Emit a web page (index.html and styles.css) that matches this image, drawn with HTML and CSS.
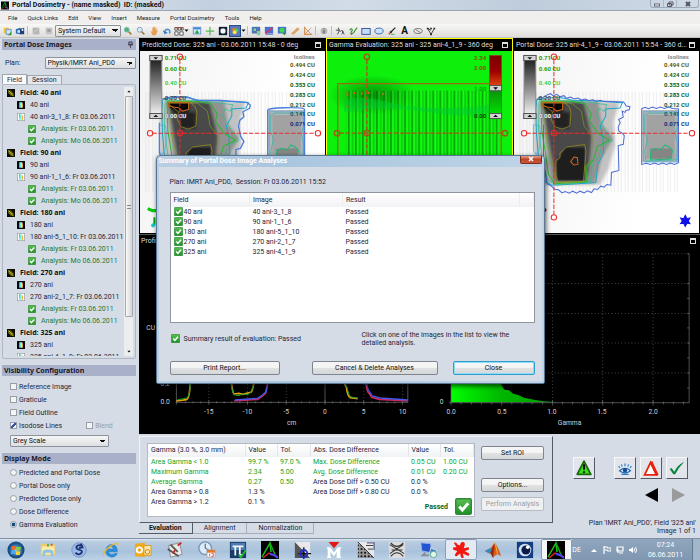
FILE: index.html
```html
<!DOCTYPE html>
<html lang="en">
<head>
<meta charset="utf-8">
<title>Portal Dosimetry</title>
<link rel="stylesheet" href="styles.css">
</head>
<body>
<svg class="defs" aria-hidden="true">
  <defs>
    <linearGradient id="greenFill" x1="0" y1="0" x2="0" y2="1"><stop offset="0" stop-color="#5cc052"/><stop offset="1" stop-color="#1f8f28"/></linearGradient>
    <linearGradient id="greyBar" x1="0" y1="0" x2="0" y2="1"><stop offset="0" stop-color="#111"/><stop offset="1" stop-color="#fff"/></linearGradient>
    <linearGradient id="gammaBar" x1="0" y1="0" x2="0" y2="1"><stop offset="0" stop-color="#7a0000"/><stop offset=".25" stop-color="#900"/><stop offset=".5" stop-color="#e84a10"/><stop offset=".51" stop-color="#0a8a0a"/><stop offset="1" stop-color="#0e0"/></linearGradient>
    <linearGradient id="histFill" x1="0" x2="1"><stop offset="0" stop-color="#0f0"/><stop offset=".5" stop-color="#00b400"/><stop offset="1" stop-color="#00a000"/></linearGradient>
    <linearGradient id="rainbow" x1="0" x2="1"><stop offset="0" stop-color="#38d"/><stop offset=".35" stop-color="#5ee"/><stop offset=".6" stop-color="#fe5"/><stop offset="1" stop-color="#e83"/></linearGradient>
    <radialGradient id="orb"><stop offset="0" stop-color="#8fd0f0"/><stop offset=".6" stop-color="#2a6ca8"/><stop offset="1" stop-color="#123c6c"/></radialGradient>
    <radialGradient id="glow"><stop offset="0" stop-color="#003000" stop-opacity=".5"/><stop offset="1" stop-color="#003000" stop-opacity="0"/></radialGradient>
    <filter id="soft" x="-20%" y="-20%" width="140%" height="140%"><feGaussianBlur stdDeviation="5"/></filter>
    <pattern id="stripes" width="21" height="30" patternUnits="userSpaceOnUse">
      <path d="M5 0v30" stroke="#005400" stroke-width="4" opacity=".6"/>
      <path d="M16 0v30" stroke="#007a00" stroke-width="3" opacity=".45"/>
      <path d="M11 0v30" stroke="#3f3" stroke-width="3" opacity=".5"/>
    </pattern>
    <pattern id="faint" width="21" height="30" patternUnits="userSpaceOnUse"><path d="M5 0v30M14 0v30" stroke="#ccc" stroke-width="3" opacity=".35"/></pattern>
    <pattern id="dots" width="4" height="4" patternUnits="userSpaceOnUse"><path d="M0 0h2v2H0z" fill="#111"/></pattern>

    <symbol id="check" viewBox="0 0 12 12"><rect x=".5" y=".5" width="11" height="11" rx="1" fill="url(#greenFill)" stroke="#2c8a34"/><path d="M3 6l2.200 2.500L9.300 3.700" fill="none" stroke="#fff" stroke-width="2"/></symbol>
    <symbol id="beam" viewBox="0 0 12 12"><path d="M0 0h12v12H0z" fill="#0c0c00"/><path d="M2 3l3-1 5 5-1 3-3 0-4-4z" fill="#8c8410"/><path d="M2.500 6l4-3M4.500 8l4-3M6.500 10l3-3" stroke="#2a2800"/><path d="M2 2l8 9" stroke="#e4d83c"/></symbol>
    <symbol id="predicted" viewBox="0 0 12 12"><path d="M0 0h12v12H0z" fill="#0a0a14"/><path d="M3 2h5l1 3v5H3z" fill="url(#rainbow)"/></symbol>
    <symbol id="portal" viewBox="0 0 12 12"><rect x=".5" y=".5" width="11" height="11" fill="#fff" stroke="#999"/><path d="M3 2h4l2 3v5H4z" fill="url(#rainbow)"/></symbol>
    <symbol id="tri" viewBox="0 0 10 6"><path d="M1 1h8L5 5.500z"/></symbol>
    <symbol id="varian" viewBox="0 0 18 18"><path d="M0 0h18v18H0z" fill="#020202"/><path d="M1 16L9 2l1 9" fill="none" stroke="#20c020" stroke-width="1.500"/><path d="M9 2l6 14" fill="none" stroke="#1a1" stroke-width="1.500"/><path d="M2 17l6-5 9 4" fill="none" stroke="#e02020" stroke-width="1.500"/><path d="M9 13l4 1 4 3" fill="none" stroke="#44f" stroke-width="2"/></symbol>

    <symbol id="scale" viewBox="135 150 552 549">
      <rect x="165" y="167" width="35" height="188" fill="url(#greyBar)" stroke="#888" stroke-width="3"/>
      <path d="M164 167h37v15h-37zM164 340h37v15h-37z" fill="#d4d4d4" stroke="#555" stroke-width="3"/>
      <path d="M175 172h14l-7 7zM175 351h14l-7-7z" fill="#111"/>
    </symbol>
    <symbol id="crosshair" viewBox="135 150 552 549">
      <g fill="none" stroke="#ee2a2a" stroke-width="3">
        <path d="M254 180v462M172 399h488" stroke-dasharray="13 5"/>
        <circle cx="254" cy="171" r="8"/><circle cx="254" cy="399" r="8"/><circle cx="254" cy="650" r="8"/><circle cx="165" cy="399" r="8"/><circle cx="666" cy="399" r="8"/>
      </g>
    </symbol>
    <symbol id="dose" viewBox="135 150 552 549">
      <path d="M150 275h481v300H150z" fill="url(#faint)"/>
      <g filter="url(#soft)">
        <path d="M195 305h255l-18 60 5 70-20 70-25 48H225l-30-70z" fill="#c2c2c2"/>
        <path d="M212 303h175l10 70 35 40-35 60-20 75H245z" fill="#929292"/>
        <path d="M218 305h125l25 105-10 100-10 35h-88l-16-90z" fill="#484848"/>
        <path d="M222 306h60v30h20v50h-48v-30l-30-30zM262 480l30-40h54v100h-80z" fill="#222"/>
      </g>
      <path d="M218 308h62v20l-20 4-38-8z" fill="#060606"/>
      <path d="M262 490l26-46h56v94h-78z" fill="#1c1c1c" opacity=".7"/>
      <path d="M518 330h108v155H518z" fill="#b5b5b5"/>
      <path d="M530 345h85v130h-85z" fill="#a2a2a2"/>
      <path d="M542 445h64v30h-64z" fill="#858585"/>
      <g fill="none" stroke-width="2">
        <path d="M203 300l30-7h46l30 8 60 1 90 6-8 16-42 3v20l-16 30 8 40 2 40-18 35-6 54-52 4-80 4-22-14-15-50-8-90-2-70z" stroke="#1aa6c8" stroke-width="3"/>
        <path d="M210 302h80l60 4 62 8-8 20-15-10-8 22 22 36 26 40-30 12-10 34-20 24-6 52-100 10-28-16-15-60-12-90z" stroke="#1fc08c"/>
        <path d="M216 304h90l40 8 20 30-6 20 24 36 36 22-36 18-12 40-20 22v44l-96 6-18-28-10-70-10-60z" stroke="#28b830" stroke-width="3"/>
        <path d="M222 309h84l30 24 8 44 24 30-2 70-18 20v46l-88 2-12-66-14-50z" stroke="#7aa41c"/>
        <path d="M300 320l5 16-3 42-24 9-22-8-10-22 4-22-28-22v-8h60zM260 480l12-7v-15l20-18 54-7 4 20-8 90-76 3-6-20z" stroke="#a89a18"/>
        <path d="M218 308h62v20l-18 5-12-10-30-4zM314 470l10 2 2 20-12 2-10-10z" stroke="#d2681c" stroke-width="3"/>
        <path d="M525 345l14-6h80l6 5v34l-10 20 8 30-2 50-92 5-4-28 8-40-8-20z" stroke="#1bb7a4"/>
        <path d="M543 452l14-8 16 5 12-15 14 7 9 10-6 25-60 3z" stroke="#20b878" stroke-width="3"/>
        <path d="M521 335h101v150H521z" stroke="#46a6dc"/>
        <path d="M193 374l18 3 4 30-5 40-8 15-9-10z" stroke="#35b4e0"/>
      </g>
    </symbol>
  </defs>
</svg>

<div class="desktop">
<div class="window">
  <header class="titlebar">
    <svg class="app-icon"><use href="#varian"/></svg>
    <h1>Portal Dosimetry - (name masked)&nbsp; ID: (masked)</h1>
    <div class="window-controls">
      <button aria-label="Minimize"><svg viewBox="0 0 8 6"><rect x="1.500" y="3" width="5" height="2" fill="#fff" stroke="#667"/></svg></button>
      <button aria-label="Restore"><svg viewBox="0 0 8 6"><path d="M3 1h4v3H3zM1.500 2.500h4v3h-4z" fill="#eee" stroke="#556"/></svg></button>
      <button class="wide" aria-label="Close window"><svg viewBox="0 0 8 6"><path d="M2 1l4 4M6 1L2 5" stroke="#556" stroke-width="2"/></svg></button>
    </div>
  </header>

  <nav class="menubar">
    <button>File</button><button>Quick Links</button><button>Edit</button><button>View</button><button>Insert</button><button>Measure</button><button>Portal Dosimetry</button><button>Tools</button><button>Help</button>
  </nav>

  <div class="toolbar">
    <button aria-label="Open"><svg viewBox="0 0 12 12"><path d="M2 2h6v7H2z" fill="#f5c63c"/><path d="M5 4h6v6H5z" fill="#cfe4f8" stroke="#5a8ac0"/><path d="M7 11l4-4v4z" fill="#2a9c3c"/></svg></button>
    <button aria-label="Save"><svg viewBox="0 0 12 12"><path d="M1 4l5-2v8l-5-1z" fill="#2f6fb8"/><path d="M6 3l5-1v8H6z" fill="#17407c"/><path d="M3 5h3v3H3zM8 3h2v3H8z" fill="#dbe9f8"/></svg></button>
    <span class="sep"></span>
    <button aria-label="Print"><svg viewBox="0 0 12 12"><path d="M2 2h8v8H2z" fill="#b4b4b4"/><path d="M3 8l6-5" stroke="#ddd"/></svg></button>
    <button aria-label="Preview"><svg viewBox="0 0 12 12"><path d="M2 2h8v8H2z" fill="#c4c4c4"/><path d="M4 4h4v3H4z" fill="#9a9a9a"/></svg></button>
    <select class="layout-select" aria-label="Layout"><option>System Default</option></select>
    <button aria-label="Zoom in"><svg viewBox="0 0 12 12"><path d="M6 6l4 4" stroke="#a87838" stroke-width="2"/><circle cx="4.500" cy="4.500" r="3" fill="#48b868" stroke="#8ab8d8"/></svg></button>
    <button aria-label="Zoom out"><svg viewBox="0 0 12 12"><path d="M6 6l4 4" stroke="#a87838" stroke-width="2"/><circle cx="4.500" cy="4.500" r="3" fill="#d8e8f8" stroke="#7a9ab8"/></svg></button>
    <button aria-label="Pan"><svg viewBox="0 0 12 12"><path d="M2 6l2 1V2h1.500v3V1H7v4l1-3.500 1 .5v4l2-1-2 4-1 2H4z" fill="#eb9c4c"/></svg></button>
    <button aria-label="Undo"><svg viewBox="0 0 12 12"><path d="M3 7c2-5 8-3 6 2" fill="none" stroke="#4f94d8" stroke-width="2"/><path d="M1 5l2 5 4-2z" fill="#3478c0"/></svg></button>
    <button class="split" aria-label="Arrange"><svg viewBox="0 0 12 12"><path d="M1 2h3v3H1zM5 2h3v3H5zM9 2h2v3H9zM1 7h4v4H1zM7 7h4v4H7z" fill="#fff" stroke="#444"/><path d="M1 2h10" stroke="#a33"/></svg><svg class="drop"><use href="#tri"/></svg></button>
    <button aria-label="Export"><svg viewBox="0 0 12 12"><rect x="1.500" y="1.500" width="9" height="8" fill="#dcefff" stroke="#4a8ad0"/><path d="M2 2h8v2H2z" fill="#3f84d4"/><path d="M6 10L3 7h2V5h2v2h2z" fill="#28a438"/></svg></button>
    <button aria-label="Crosshair"><svg viewBox="0 0 12 12"><path d="M6 1v10M1 6h10" stroke="#58b858" stroke-width="1.500"/></svg></button>
    <button aria-label="Invert"><svg viewBox="0 0 12 12"><path d="M1 1h10v10H1z" fill="#123"/><rect x="3" y="3" width="6" height="6" rx="2" fill="#f4f8fc"/></svg></button>
    <button class="split" aria-label="Colours"><span class="pressed"><svg viewBox="0 0 12 12"><circle cx="4.500" cy="4" r="3" fill="#e8722c"/><circle cx="8" cy="5" r="3" fill="#50c850"/><circle cx="5.500" cy="8" r="3" fill="#fbe24c"/></svg></span><svg class="drop"><use href="#tri"/></svg></button>
    <span class="sep"></span>
    <button aria-label="Image"><svg viewBox="0 0 12 12"><path d="M1 1h10v8H1z" fill="#4c74b8"/><path d="M3 3h3v3H3zM7 6h4v5H7z" fill="#8ccc8c"/></svg></button>
    <button aria-label="Edit image"><svg viewBox="0 0 12 12"><path d="M1 1h10v8H1z" fill="#4474d0"/><path d="M2 9l8-7" stroke="#d03868" stroke-width="2"/><path d="M2 10h9" stroke="#4474d0"/></svg></button>
    <button aria-label="Register"><svg viewBox="0 0 12 12"><path d="M1 1h10v8H1z" fill="#4474d0"/><circle cx="6" cy="5" r="3" fill="#3cd848"/><path d="M6 8l3 3 2-2z" fill="#2a8c30"/></svg></button>
    <button aria-label="Ruler"><svg viewBox="0 0 12 12"><path d="M2 9l7-7 2 2-7 6z" fill="#e8a45c" stroke="#c07828" stroke-width=".5"/></svg></button>
    <button aria-label="Angle"><svg viewBox="0 0 12 12"><path d="M2 1v9h9" stroke="#d89048" fill="none" stroke-width="1.500"/><path d="M2 2l8 8M3 9l7-7" stroke="#b8946c"/></svg></button>
    <span class="sep"></span>
    <button aria-label="Information"><svg viewBox="0 0 12 12"><circle cx="6" cy="6" r="4" fill="#b4b4b4"/><path d="M6 3v1M6 5v4" stroke="#666" stroke-width="1.500"/></svg></button>
    <span class="sep"></span>
    <button aria-label="Curve"><svg viewBox="0 0 12 12"><path d="M1 5h5M4 2l1 4-2 4M6 7c3-4 5 0 2 3M9 6l2 4" fill="none" stroke="#333"/></svg></button>
    <button aria-label="Freehand"><svg viewBox="0 0 12 12"><path d="M2 5c3-4 4 0 2 2s2 4 4-1l3-4" fill="none" stroke="#2f8f2f" stroke-width="1.300"/><path d="M3 10h2" stroke="#c33"/></svg></button>
    <button aria-label="Rectangle"><svg viewBox="0 0 12 12"><rect x="1" y="3" width="10" height="7" fill="#c4dcf8" stroke="#24458c"/></svg></button>
    <button aria-label="Ellipse"><svg viewBox="0 0 12 12"><ellipse cx="6" cy="6" rx="5" ry="3.500" fill="#cce2fa" stroke="#2c5ca8"/></svg></button>
    <button aria-label="Arrow"><svg viewBox="0 0 12 12"><path d="M10 2L4 8" stroke="#222" stroke-width="1.500"/><path d="M7 5l-2 4-2-2z" fill="#222"/><path d="M2 9h2" stroke="#d22" stroke-width="2"/><path d="M5 10h4" stroke="#3a3"/></svg></button>
    <button class="text-tool" aria-label="Text">A</button>
    <button aria-label="Delete"><svg viewBox="0 0 12 12"><ellipse cx="6" cy="6" rx="5" ry="3" fill="none" stroke="#666"/><path d="M3 4l6 4" stroke="#666"/></svg></button>
    <button aria-label="Nodes"><svg viewBox="0 0 12 12"><path d="M2 3l4 7 4-7M2 3l4 2" fill="none" stroke="#222"/><path d="M1 2h2v2H1zM5 2h2v2H5zM9 2h2v2H9zM5 9h2v2H5z" fill="#222"/></svg></button>
  </div>

  <main class="workspace">
    <aside class="sidebar">
      <h2 class="section-title">Portal Dose Images<svg class="pin" viewBox="0 0 6 8"><path d="M1 1h4v3H1zM0 4.500h6M3 5v3" fill="#99a" stroke="#334"/></svg></h2>
      <div class="plan-row"><label for="plan">Plan:</label><select id="plan"><option>Physik/IMRT Ani_PD0</option></select></div>
      <div class="tabs"><button class="active">Field</button><button>Session</button></div>
      <div class="tree-box">
        <ul class="tree">
          <li class="field"><svg><use href="#beam"/></svg>Field: 40 ani</li>
          <li class="image"><svg><use href="#predicted"/></svg>40 ani</li>
          <li class="image"><svg><use href="#portal"/></svg>40 ani-3_1_8: Fr 03.06.2011</li>
          <li class="analysis"><svg><use href="#check"/></svg>Analysis: Fr 03.06.2011</li>
          <li class="analysis"><svg><use href="#check"/></svg>Analysis: Mo 06.06.2011</li>
          <li class="field"><svg><use href="#beam"/></svg>Field: 90 ani</li>
          <li class="image"><svg><use href="#predicted"/></svg>90 ani</li>
          <li class="image"><svg><use href="#portal"/></svg>90 ani-1_1_6: Fr 03.06.2011</li>
          <li class="analysis"><svg><use href="#check"/></svg>Analysis: Fr 03.06.2011</li>
          <li class="analysis"><svg><use href="#check"/></svg>Analysis: Mo 06.06.2011</li>
          <li class="field"><svg><use href="#beam"/></svg>Field: 180 ani</li>
          <li class="image"><svg><use href="#predicted"/></svg>180 ani</li>
          <li class="image"><svg><use href="#portal"/></svg>180 ani-5_1_10: Fr 03.06.2011</li>
          <li class="analysis"><svg><use href="#check"/></svg>Analysis: Fr 03.06.2011</li>
          <li class="analysis"><svg><use href="#check"/></svg>Analysis: Mo 06.06.2011</li>
          <li class="field"><svg><use href="#beam"/></svg>Field: 270 ani</li>
          <li class="image"><svg><use href="#predicted"/></svg>270 ani</li>
          <li class="image"><svg><use href="#portal"/></svg>270 ani-2_1_7: Fr 03.06.2011</li>
          <li class="analysis"><svg><use href="#check"/></svg>Analysis: Fr 03.06.2011</li>
          <li class="analysis"><svg><use href="#check"/></svg>Analysis: Mo 06.06.2011</li>
          <li class="field"><svg><use href="#beam"/></svg>Field: 325 ani</li>
          <li class="image"><svg><use href="#predicted"/></svg>325 ani</li>
          <li class="image"><svg><use href="#portal"/></svg>325 ani-4_1_9: Fr 03.06.2011</li>
        </ul>
        <div class="scrollbar"><svg class="up"><use href="#tri"/></svg><span class="thumb"><i></i></span><svg><use href="#tri"/></svg></div>
      </div>
      <h2 class="section-title">Visibility Configuration</h2>
      <div class="options">
        <label><input type="checkbox">Reference Image</label>
        <label><input type="checkbox">Graticule</label>
        <label><input type="checkbox">Field Outline</label>
        <div class="pair"><label><input type="checkbox" checked>Isodose Lines</label><label class="disabled"><input type="checkbox" disabled>Blend</label></div>
        <select class="grey-scale" aria-label="Colour scale"><option>Grey Scale</option></select>
      </div>
      <h2 class="section-title">Display Mode</h2>
      <div class="options modes">
        <label><input type="radio" name="mode">Predicted and Portal Dose</label>
        <label><input type="radio" name="mode">Portal Dose only</label>
        <label><input type="radio" name="mode">Predicted Dose only</label>
        <label><input type="radio" name="mode">Dose Difference</label>
        <label><input type="radio" name="mode" checked>Gamma Evaluation</label>
      </div>
    </aside>

    <section class="content">
      <div class="views">
        <article class="view">
          <h3><span>Predicted Dose: 325 ani - 03.06.2011 15:48 - 0 deg</span><button class="max" aria-label="Maximize"></button></h3>
          <svg class="image white" viewBox="135 150 552 549" preserveAspectRatio="xMidYMid slice">
            <use href="#dose" x="135" y="150" width="552" height="549"/>
            <path d="M202 297l30-7 44 1 28 10 70 0 80 6 10 8-2 10-20 10 3 15-12 10-4 18 6 30 10 16-10 20-14 4v100H240l-47-90v-90M516 330q4-6 50-7 58-1 60 5v160H516z" fill="none" stroke="#4a7fdc" stroke-width="4"/>
            <use href="#scale" x="135" y="150" width="552" height="549"/>
            <g class="dose-labels"><text x="209" y="182" fill="#0a9a0a">0.71 CU</text><text x="209" y="212" fill="#0aa80a">0.60 CU</text><text x="209" y="256" fill="#3fd03f">0.40 CU</text><text x="209" y="301" fill="#444">0.20 CU</text><text x="209" y="355" class="pale">0.00 CU</text></g>
            <g class="dose-labels right"><text x="657" y="178" fill="#888">Isolines</text><text x="657" y="202" fill="#5c5c08">0.494 CU</text><text x="657" y="231" fill="#2f6408">0.424 CU</text><text x="657" y="261" fill="#0c640c">0.353 CU</text><text x="657" y="291" fill="#0a6030">0.283 CU</text><text x="657" y="320" fill="#0a6048">0.212 CU</text><text x="657" y="349" fill="#0c5c70">0.141 CU</text><text x="657" y="379" fill="#142c78">0.071 CU</text></g>
            <use href="#crosshair" x="135" y="150" width="552" height="549"/>
            <path d="M158 624l14 6 14 0 10 18" fill="none" stroke="#08c808" stroke-width="9"/><path d="M178 650v24" stroke="#0a0" stroke-width="6"/><circle cx="174" cy="674" r="6" fill="#1cc"/>
          </svg>
        </article>
        <article class="view selected">
          <h3><span>Gamma Evaluation: 325 ani - 325 ani-4_1_9 - 360 deg</span><button class="max" aria-label="Maximize"></button></h3>
          <svg class="image" viewBox="234 150 552 549" preserveAspectRatio="xMidYMid slice">
            <path d="M234 150h552v549H234z" fill="#0cf00c"/>
            <ellipse cx="370" cy="285" rx="130" ry="60" fill="url(#glow)"/>
            <path d="M290 272h455v427H290z" fill="url(#stripes)"/>
            <path d="M285 300q60-14 120 4t150 20 180-10v20q-80 20-170 6t-140-14-140 10z" fill="#0c3" opacity=".5"/>
            <path d="M295 276v12M316 276v6M338 276v8M359 276v6M402 278v8M295 316v6" stroke="#e06010" stroke-width="5"/>
            <path d="M266 699V251h488v448" fill="none" stroke="#9a6a10" stroke-width="4"/>
            <g fill="none" stroke="#ab5414" stroke-width="4"><path d="M353 180v519M272 399h488" stroke-dasharray="13 5"/><circle cx="353" cy="171" r="8"/><circle cx="353" cy="399" r="8"/><circle cx="264" cy="399" r="8"/><circle cx="765" cy="399" r="8"/></g>
            <rect x="719" y="167" width="36" height="188" fill="url(#gammaBar)" stroke="#a33" stroke-width="2"/>
            <path d="M719 257h36v15h-36zM719 340h36v15h-36z" fill="#d4d4d4" stroke="#555" stroke-width="3"/><path d="M730 262h14l-7 7zM730 351h14l-7-7z"/>
            <g class="dose-labels right"><text x="709" y="182" fill="#7c5408">2.34</text><text x="709" y="210" fill="#7c5408">2.00</text><text x="709" y="273" fill="#08a808">1.00</text><text x="709" y="355" fill="#064c06">0.00</text></g>
          </svg>
        </article>
        <article class="view">
          <h3><span>Portal Dose: 325 ani-4_1_9 - 03.06.2011 15:54 - 360 d...</span><button class="max" aria-label="Maximize"></button></h3>
          <svg class="image white" viewBox="135 150 552 549" preserveAspectRatio="xMidYMid slice">
            <use href="#dose" x="135" y="150" width="552" height="549"/>
            <path d="M202 300l8-8 10 2 10-8 14-5 8 7 10-5 10 7 12-3 8 8 12-4 10 6 12-3 10 6 12-3 10 5 12-3 10 5 12-3 10 3 60 2 8 12 11 2-2 9-10 2-3 6-8-4 3 18-14 7 5 9-6 14 2 12 8 4 8 9-3 26-15 4 2 74-22 6-2 38-12-2-8 8-10-3-10 10-10-2-8 11-12-5-10 6-12-5-10 6-12-6-10 6-12-5-10 4-10-9-12-2-10-10-12-6-11-60V374" fill="none" stroke="#4a6cd4" stroke-width="3"/>
            <path d="M516 326l10-4 10 4 12-5 12 4 12-4 12 4 12-4 12 4 18 2v160l-12 5-12-4-12 4-12-4-12 4-12-4-12 4-12-3-14 3z" fill="none" stroke="#4a6cd4" stroke-width="3"/>
            <use href="#scale" x="135" y="150" width="552" height="549"/>
            <g class="dose-labels"><text x="209" y="182" fill="#0a9a0a">0.71 CU</text><text x="209" y="212" fill="#0aa80a">0.60 CU</text><text x="209" y="256" fill="#3fd03f">0.40 CU</text><text x="209" y="301" fill="#444">0.20 CU</text><text x="209" y="355" class="pale">0.00 CU</text></g>
            <g class="dose-labels right"><text x="657" y="178" fill="#888">Isolines</text><text x="657" y="202" fill="#5c5c08">0.494 CU</text><text x="657" y="231" fill="#2f6408">0.424 CU</text><text x="657" y="261" fill="#0c640c">0.353 CU</text><text x="657" y="291" fill="#0a6030">0.283 CU</text><text x="657" y="320" fill="#0a6048">0.212 CU</text><text x="657" y="349" fill="#0c5c70">0.141 CU</text><text x="657" y="379" fill="#142c78">0.071 CU</text></g>
            <use href="#crosshair" x="135" y="150" width="552" height="549"/>
            <circle cx="226" cy="628" r="6" fill="#c00"/>
            <path d="M646 644l5 10 9-2-5 9 5 8-9-1-5 9-5-9-9 1 5-8-5-9 9 2z" fill="#1010e8" stroke="#1010e8" stroke-width="3"/>
          </svg>
        </article>
      </div>

      <div class="plots">
        <article class="plot">
          <h3><span>Profile</span></h3>
          <svg viewBox="3 -222 840 561" preserveAspectRatio="xMidYMid meet">
            <g class="axis"><path d="M113 243h695M115 -202v445M808 -202v445M560 -202v445"/><path d="M115 236v14M142 240v6M165 240v6M188 240v6M212 236v14M235 240v6M258 240v6M281 240v6M305 240v6M328 236v14M351 240v6M374 240v6M398 240v6M421 240v6M444 236v14M467 240v6M490 240v6M514 240v6M537 240v6M560 236v14M583 240v6M607 240v6M630 240v6M653 240v6M676 236v14M700 240v6M723 240v6M746 240v6M769 240v6M792 236v14"/></g>
            <path class="grid" d="M212 -202v445M328 -202v445M444 -202v445M676 -202v445M792 -202v445"/>
            <g fill="none" stroke-width="5">
              <path d="M115 239l30-4q10-4 11-50M278 160q4 55 10 58l14-2 12 3 14-4 10-2q8-6 12-53M600 100q14 85 24 98 4 28 12 31l22 3" stroke="#e8a010"/>
              <path d="M118 235l26-4q12-4 13-50M276 160q4 52 12 60l14 3 12-6 14 3 8-6q10-8 12-54M604 100q14 85 22 98 6 28 12 29l20 4" stroke="#1b9c28" stroke-width="3"/>
              <path d="M288 239l70-5 12-8 12-10 10-50M678 160q6 52 14 56l8 12 22 6 86 5" stroke="#d02858"/>
              <path d="M290 236l68-5 12-8 14-12 10-50M680 150q6 58 14 62l8 12 22 6 84 6" stroke="#4a58f0" stroke-width="4"/>
            </g>
            <g class="axis-labels"><text x="81" y="249">0.0</text><text x="81" y="195">0.2</text><text x="38" y="26">CU</text><text x="212" y="277">-15</text><text x="328" y="277">-10</text><text x="444" y="277">-5</text><text x="560" y="277">0</text><text x="676" y="277">5</text><text x="792" y="277">10</text><text x="460" y="312">cm</text></g>
          </svg>
        </article>
        <article class="plot">
          <h3><span></span><button class="max" aria-label="Maximize"></button></h3>
          <svg viewBox="843 -222 840 561" preserveAspectRatio="xMidYMid meet">
            <path class="grid" d="M936 -202h713M936 -113h713M936 -23h713M936 65h713M936 155h713M1088 -202v445M1240 -202v445M1390 -202v445M1541 -202v445"/>
            <path d="M936 243V60h60q70 30 90 130l10 15 14 2 12 10 16 4 16 8 30 6 30 5 36 2v1z" fill="url(#histFill)"/>
            <g class="axis"><path d="M930 244h720M936 -202v445M1649 -202v446M1643 -202h6M1643 -113h6M1643 -68h6M1643 -23h6M1643 20h6M1643 65h6M1643 110h6M1643 155h6M1643 200h6"/><path d="M936 236v16M966 241v8M997 241v8M1027 241v8M1058 241v8M1088 236v16M1118 241v8M1149 241v8M1179 241v8M1210 241v8M1240 236v16M1270 241v8M1300 241v8M1330 241v8M1360 241v8M1390 236v16M1420 241v8M1451 241v8M1481 241v8M1511 241v8M1541 236v16M1572 241v8M1602 241v8M1632 241v8"/></g>
            <g class="axis-labels"><text x="908" y="249">0</text><text x="936" y="277">0.0</text><text x="1088" y="277">0.5</text><text x="1238" y="277">1.0</text><text x="1388" y="277">1.5</text><text x="1541" y="277">2.0</text><text x="1291" y="312">Gamma</text></g>
          </svg>
        </article>
      </div>

      <div class="evaluation">
        <div class="eval-left">
          <div class="eval-panel">
            <div class="results">
              <table>
                <thead><tr><th>Gamma (3.0 %, 3.0 mm)</th><th>Value</th><th>Tol.</th><th>Abs. Dose Difference</th><th>Value</th><th>Tol.</th></tr></thead>
                <tbody>
                  <tr><td class="ok">Area Gamma &lt; 1.0</td><td class="ok">99.7 %</td><td class="ok">97.0 %</td><td class="ok">Max. Dose Difference</td><td class="ok">0.05 CU</td><td class="ok">1.00 CU</td></tr>
                  <tr><td class="ok">Maximum Gamma</td><td class="ok">2.34</td><td class="ok">5.00</td><td class="ok">Avg. Dose Difference</td><td class="ok">0.01 CU</td><td class="ok">0.20 CU</td></tr>
                  <tr><td class="ok">Average Gamma</td><td class="ok">0.27</td><td class="ok">0.50</td><td>Area Dose Diff &gt; 0.50 CU</td><td>0.0 %</td><td></td></tr>
                  <tr><td>Area Gamma &gt; 0.8</td><td>1.3 %</td><td></td><td>Area Dose Diff &gt; 0.80 CU</td><td>0.0 %</td><td></td></tr>
                  <tr><td>Area Gamma &gt; 1.2</td><td>0.1 %</td><td></td><td></td><td></td><td></td></tr>
                </tbody>
              </table>
              <div class="verdict"><strong>Passed</strong><svg><use href="#check"/></svg></div>
            </div>
            <div class="eval-buttons"><button class="btn">Set ROI</button><button class="btn">Options...</button><button class="btn" disabled>Perform Analysis</button></div>
          </div>
          <div class="bottom-tabs"><button class="active">Evaluation</button><button>Alignment</button><button>Normalization</button></div>
        </div>
        <div class="eval-right">
          <div class="status-buttons">
            <button class="first" aria-label="Warning"><svg viewBox="0 0 22 22"><path d="M11 3.500L18.500 18h-15z" fill="#3be01c" stroke="#1c6a10" stroke-linejoin="round" stroke-width="2"/><path d="M11 7v6M11 14.500v2" stroke="#111" stroke-width="2.200"/></svg></button>
            <button aria-label="Review"><svg viewBox="0 0 22 22"><path d="M5 14q6-5 12 0-6 5-12 0z" fill="#fff" stroke="#2a6cb0" stroke-width="1.400"/><circle cx="11" cy="13.500" r="2.400" fill="#1a4c90"/><path d="M4 9l1.500 2M7 7l1 2.500M11 6v3M15 7l-1 2.500M18 9l-1.500 2M7 18h8" stroke="#2a7cc8" stroke-width="1.300"/></svg></button>
            <button aria-label="Delta"><svg viewBox="0 0 22 22"><path d="M10.500 5L17 18.500H4z" fill="#fff" stroke="#e8240c" stroke-width="2"/><path d="M11 4l7 15" stroke="#e8240c" stroke-width="3"/></svg></button>
            <button aria-label="Approve"><svg viewBox="0 0 22 22"><path d="M3 12l2-1 3 4q4-8 11-11-6 6-10 14H7z" fill="#08863c"/></svg></button>
          </div>
          <div class="pager"><button aria-label="Previous"><svg viewBox="0 0 14 14"><path d="M13 0v14L0 7z"/></svg></button><button aria-label="Next" disabled><svg viewBox="0 0 14 14"><path d="M1 0v14l13-7z" fill="#9a9a9a"/></svg></button></div>
          <p class="status">Plan 'IMRT Ani_PD0', Field '325 ani'<br>Image 1 of 1</p>
        </div>
      </div>
    </section>
  </main>

  <div class="overlay">
    <section class="dialog" role="dialog" aria-labelledby="dlg-title">
      <header><h2 id="dlg-title">Summary of Portal Dose Image Analyses</h2><button aria-label="Close dialog"><svg viewBox="0 0 8 6"><path d="M2 1l4 4M6 1L2 5" stroke="#fff" stroke-width="1.500"/></svg></button></header>
      <div class="dialog-body">
        <p class="session">Plan: IMRT Ani_PD0,&nbsp; Session: Fr 03.06.2011 15:52</p>
        <div class="list">
          <table>
            <thead><tr><th>Field</th><th>Image</th><th>Result</th><th></th></tr></thead>
            <tbody>
              <tr><td><svg><use href="#check"/></svg>40 ani</td><td>40 ani-3_1_8</td><td>Passed</td><td></td></tr>
              <tr><td><svg><use href="#check"/></svg>90 ani</td><td>90 ani-1_1_6</td><td>Passed</td><td></td></tr>
              <tr><td><svg><use href="#check"/></svg>180 ani</td><td>180 ani-5_1_10</td><td>Passed</td><td></td></tr>
              <tr><td><svg><use href="#check"/></svg>270 ani</td><td>270 ani-2_1_7</td><td>Passed</td><td></td></tr>
              <tr><td><svg><use href="#check"/></svg>325 ani</td><td>325 ani-4_1_9</td><td>Passed</td><td></td></tr>
            </tbody>
          </table>
        </div>
        <div class="summary"><p class="result"><svg><use href="#check"/></svg>Summary result of evaluation: Passed</p><p class="hint">Click on one of the images in the list to view the detailed analysis.</p></div>
        <div class="actions"><button class="btn print">Print Report...</button><button class="btn cancel">Cancel &amp; Delete Analyses</button><button class="btn close">Close</button></div>
      </div>
    </section>
  </div>
</div>

<footer class="taskbar">
  <button aria-label="Start"><svg viewBox="0 0 20 20"><circle cx="10" cy="10" r="9.500" fill="url(#orb)"/><path d="M5 6q2-1.500 4.500 0L9 10q-2.500-1-4.500 0z" fill="#f06a28"/><path d="M10.500 6q2.500 1.200 5 0L15 10q-2.500 1.200-5 0z" fill="#8ccc38"/><path d="M4.500 11q2-1.200 4.500 0l-.5 4q-2-1.200-4.500 0z" fill="#4aa8f0"/><path d="M10 11q2.500 1.200 5 0l-.5 4q-2.500 1.200-5 0z" fill="#fcd030"/></svg></button>
  <button aria-label="Explorer"><svg viewBox="0 0 20 20"><path d="M2 3h6l1 1h9v12H2z" fill="#f0cc68"/><path d="M3 6h14v9H3z" fill="#fbeaa8"/><path d="M9 3h2v3H9z" fill="#48b058"/><path d="M13 3h2v2h-2z" fill="#d84040"/><path d="M4 17v-6q6-3 12 0v6h-3v-4H7v4z" fill="#8cc4e8"/></svg></button>
  <button aria-label="Sync"><svg viewBox="0 0 20 20"><circle cx="10" cy="10" r="8" fill="#9cb8e8" stroke="#7090c8"/><path d="M14 6q-6-3-7 1 0 2 4 3t1 4q-3 2-6-1M12 3l2 4-4 1" fill="none" stroke="#1c3470" stroke-width="2"/></svg></button>
  <button aria-label="Internet Explorer"><svg viewBox="0 0 20 20"><path d="M16 12h-9q1 3 4 3 2 0 3-1h3q-2 4-6 4-7-1-7-7 1-7 7-7 6 0 6 8zM7 9h6q-1-3-3-3t-3 3" fill="#2a90dc" stroke="#1668b0" stroke-width=".5"/><path d="M2 17Q0 13 9 6q8-5 9-2" fill="none" stroke="#f0b828" stroke-width="1.500"/></svg></button>
  <button aria-label="Outlook"><svg viewBox="0 0 20 20"><path d="M1 3l11-1v16L1 17z" fill="#f0a81c"/><circle cx="6" cy="10" r="3" fill="none" stroke="#fff" stroke-width="2"/><path d="M11 5h8v11h-8z" fill="#fce8a8" stroke="#d89418"/><circle cx="15" cy="12" r="2.500" fill="none" stroke="#c07c10"/></svg></button>
  <button aria-label="Tools"><svg viewBox="0 0 20 20"><path d="M3 5l12-3 3 13-13 3z" fill="#e8e8e4" stroke="#888"/><path d="M2 9l12 8M5 4l8 8" stroke="#555" stroke-width="2"/><path d="M13 5l4-3M8 14l2-4" stroke="#c02828" stroke-width="2"/></svg></button>
  <button aria-label="Calendar"><svg viewBox="0 0 20 20"><circle cx="8" cy="8" r="7" fill="#dcecf8" stroke="#7898b8" stroke-width="1.500"/><path d="M8 3v5l4 2" stroke="#345" fill="none"/><path d="M10 10h9v8h-9z" fill="#fff" stroke="#aaa"/><path d="M10 10h9v3h-9z" fill="#e07830"/><path d="M13 14v3M15 14h2v3h-2" stroke="#d44" fill="none"/></svg></button>
  <button aria-label="Planning"><svg viewBox="0 0 20 20"><path d="M1 1h18v18H1z" fill="#183c68"/><path d="M2 2h16v8H2z" fill="#4c7cb0"/><path d="M4 6h12M7 6v10M12 6v9l3 1" stroke="#f4f4f4" stroke-width="2" fill="none"/><path d="M11 15l2 3 6-8" stroke="#20c030" stroke-width="2" fill="none"/></svg></button>
  <button aria-label="Eclipse"><svg viewBox="0 0 18 18"><use href="#varian"/></svg></button>
  <button aria-label="Target"><svg viewBox="0 0 20 20"><path d="M2 1h17v18H2z" fill="#e8e8e8"/><path d="M2 1l17 18H2z" fill="#555"/><path d="M12 7v13M6 14h14" stroke="#111" stroke-width="1.500"/><circle cx="12" cy="14" r="4" fill="none" stroke="#2030c8" stroke-width="2"/></svg></button>
  <button aria-label="Mosaiq"><svg viewBox="0 0 20 20"><path d="M4 1h12l-6 7z" fill="#e01818"/><path d="M2 7h4l4 6 4-6h4v1l-1 1v8l1 2h-5v-7l-3 5-4-5v5l1 2H2l1-2V9L2 8z" fill="#fff"/></svg></button>
  <button aria-label="Imaging"><svg viewBox="0 0 20 20"><path d="M1 1h18v18H1z" fill="#e8e8ec"/><path d="M1 1v18h18z" fill="#999"/><path d="M1 1v18h18z" fill="url(#dots)"/><path d="M1 1l18 18M10 5h8M12 9h6" stroke="#333"/><path d="M11 2h8v8" fill="none" stroke="#668" stroke-width="1.500"/></svg></button>
  <button aria-label="Chart"><svg viewBox="0 0 20 20"><path d="M1 1h18v18H1z" fill="#dcdcdc"/><path d="M2 4l16 10M2 14L17 4M4 10h12M3 17q7-8 14 0M3 2q7 8 14 0" stroke="#333" fill="none" stroke-width="1.200"/></svg></button>
  <button aria-label="Remote"><svg viewBox="0 0 20 20"><path d="M1 2l11 1v10L2 11z" fill="#2454d0" stroke="#9cb4e8"/><path d="M12 8l6 2v7l-8-1z" fill="#4078d8" stroke="#ddd"/><path d="M6 13l-3 3h7" stroke="#889" fill="none" stroke-width="2"/><circle cx="15" cy="15" r="3.500" fill="#e8f4e8" stroke="#4a8"/></svg></button>
  <button class="running" aria-label="Reader"><svg viewBox="0 0 20 20"><path d="M2 2q3-1 4 2l3 1q0-4 3-4t2 4l-1 3 5-1q2 1 0 3l-4 1 5 3q1 3-2 2l-5-2 1 4q-1 2-3 0l-1-4-4 3q-3 0-1-3l2-3-4-1q-2-2 0-3l3 0z" fill="#f01810"/></svg></button>
  <button aria-label="Matlab"><svg viewBox="0 0 20 20"><path d="M1 11l6-3 5-6q4 5 7 15-5-5-9 2-2-6-4-5z" fill="#d85c18"/><path d="M1 11l6-3 3 2-4 4z" fill="#3c88c0"/><path d="M12 2q-1 8-2 17l-3-6z" fill="#8c2c14"/><path d="M12 2q2 5 3 13" stroke="#f8b840" fill="none"/></svg></button>
  <button aria-label="Viewer"><svg viewBox="0 0 20 20"><path d="M1 1h18v18H1z" fill="#143c80"/><circle cx="10" cy="10" r="7" fill="#d4e0f4"/><circle cx="11" cy="10" r="5" fill="#0c1c48"/><circle cx="13" cy="7" r="2" fill="#fff"/></svg></button>
  <button class="running active" aria-label="Portal Dosimetry"><svg viewBox="0 0 18 18"><use href="#varian"/></svg></button>
  <div class="tray">
    <span>DE</span>
    <svg viewBox="0 0 8 8"><path d="M1 6h6L4 3z" fill="#fff"/></svg>
    <svg viewBox="0 0 8 8"><path d="M1 0v8M1 1h3l1 1h3v3H5L4 4H1" fill="none" stroke="#fff" stroke-width="1.200"/></svg>
    <svg viewBox="0 0 8 8"><path d="M1 1h6v4H1zM3 7h4M2 3v4" fill="none" stroke="#fff" stroke-width="1.200"/></svg>
    <svg viewBox="0 0 8 8"><path d="M0 3h1.500L4 1v6L1.500 5H0z" fill="#fff"/><path d="M5 2.500q1 1.500 0 3M6.500 1q2 3 0 6" fill="none" stroke="#fff"/></svg>
    <time>07:24<br>06.06.2011</time>
    <button class="show-desktop" aria-label="Show desktop"></button>
  </div>
</footer>
</div>
</body>
</html>
```

FILE: styles.css
```css
* { box-sizing: border-box; }

html, body { height: 100%; margin: 0; }

body {
  font: 7px/10px Roboto, "Liberation Sans", sans-serif;
  color: #26263a;
  background: #d5dce4;
}

h1, h2, h3, p, ul { margin: 0; padding: 0; font-size: 7px; }
p { font-weight: 400; }
ul { list-style: none; }

button, select, input {
  margin: 0;
  padding: 0;
  border: 0;
  background: none;
  color: inherit;
  font: inherit;
  white-space: nowrap;
}

svg { display: block; flex: none; }
.defs { position: absolute; width: 0; height: 0; }

.desktop { display: flex; flex-direction: column; min-height: 100vh; }
.window { position: relative; flex: 1; display: flex; flex-direction: column; }

/* Title, menu and tool bars */
.titlebar {
  display: flex;
  height: 11px;
  padding-left: 1px;
  background: linear-gradient(100deg, #e6edf5, #c3d0df 30%, #d2dce8 50%, #bfccdb 75%, #cfdae6);
  border-bottom: 1px solid #9aa4b0;
}
.titlebar h1 { padding-left: 3px; color: #111; line-height: 11px; }
.app-icon { width: 8px; height: 9px; margin-top: 1px; }
.window-controls { display: flex; height: 8px; margin: 0 1px 0 auto; border: 1px solid #9daaba; border-top: 0; border-radius: 0 0 3px 3px; }
.window-controls button { display: grid; place-items: center; width: 13px; border-right: 1px solid #aeb9c6; }
.window-controls .wide { width: 21px; border: 0; }
.window-controls svg { width: 8px; height: 6px; }

.menubar { display: flex; gap: 10px; height: 13px; padding-left: 8px; background: #f0efee; font-size: 6px; }
.menubar button { line-height: 13px; color: #222; }

.toolbar { display: flex; align-items: center; height: 14px; background: linear-gradient(#f8f8f7, #dedddb); border-bottom: 1px solid #c4c4c4; }
.toolbar button { width: 13px; height: 13px; display: flex; align-items: center; justify-content: center; }
.toolbar button svg { width: 10px; height: 10px; }
.toolbar .split { width: 17px; }
.toolbar .split .drop { width: 5px; height: 3px; }
.toolbar .pressed { padding: 1px; background: #5a78b8; border: 1px solid #26488c; }
.toolbar .pressed svg { width: 8px; height: 8px; }
.toolbar .text-tool { font-size: 10px; font-weight: 700; color: #111; }
.sep { width: 1px; height: 9px; margin: 0 1px; background: #bcbcbc; }

select {
  appearance: none;
  height: 12px;
  padding: 0 2px;
  border: 1px solid #8e939b;
  border-radius: 1px;
  color: #111;
  background:
    linear-gradient(45deg, transparent 50%, #111 50%) right 5px center / 3px 3px no-repeat,
    linear-gradient(-45deg, transparent 50%, #111 50%) right 2px center / 3px 3px no-repeat,
    linear-gradient(#f6f6f6, #dddedf);
}
.layout-select { width: 66px; }

/* Sidebar */
.workspace { flex: 1; display: flex; }
.sidebar { width: 139px; padding: 1px 3px 0 2px; background: #d5dce5; }
.section-title { display: flex; align-items: center; justify-content: space-between; height: 11px; padding: 0 3px 0 2px; color: #15152a; background: #a9b1c9; font-family: "Noto Sans", sans-serif; }
.pin { width: 5px; height: 7px; }
.plan-row { display: flex; align-items: center; gap: 24px; padding: 7px 0 5px 3px; }
.plan-row select { flex: 1; }
.tabs { display: flex; align-items: flex-end; height: 10px; }
.tabs button { height: 9px; padding: 0 4px; line-height: 8px; border: 1px solid #a0a6b0; border-bottom: 0; background: #e4e7ec; }
.tabs .active { height: 10px; background: #fbfbfc; }
.tree-box { display: flex; height: 275px; padding: 2px 2px 2px 4px; border: 1px solid #b0b7c1; border-radius: 2px; }
.tree { flex: 1; overflow: hidden; white-space: nowrap; }
.tree li { display: flex; align-items: center; height: 12px; gap: 5px; }
.tree svg { width: 8px; height: 8px; }
.tree .field { font-weight: 700; font-family: "Noto Sans", sans-serif; color: #111; }
.tree .image { padding-left: 10px; }
.tree .analysis { padding-left: 21px; color: #1c7a34; }
.scrollbar { display: flex; flex-direction: column; align-items: center; width: 9px; padding: 3px 0; background: #ecedef; }
.scrollbar svg { width: 4px; height: 3px; }
.scrollbar .up { transform: rotate(180deg); }
.scrollbar .thumb { display: grid; place-items: center; width: 8px; height: 221px; margin: 3px 0 auto; border: 1px solid #a4a8ae; border-radius: 1px; background: linear-gradient(90deg, #fafafa, #d2d4d8); }
.thumb i { width: 4px; height: 4px; border: solid #888; border-width: 1px 0; }
.tree-box + .section-title { margin-top: 6px; }
.options { display: flex; flex-direction: column; padding: 4px 8px 6px; }
.options label { display: flex; align-items: center; gap: 2px; height: 13px; }
.options .pair { display: flex; gap: 24px; }
.options .disabled { color: #9a9fa8; }
.grey-scale { width: 99px; margin-top: 3px; }
.modes { padding-top: 2px; padding-bottom: 0; }
input[type="checkbox"], input[type="radio"] { appearance: none; width: 7px; height: 7px; border: 1px solid #9a9ea6; background: #f4f4f4; }
input[type="checkbox"]:checked { background: linear-gradient(135deg, #f4f4f4 35%, #3450a8 35%, #3450a8 65%, #f4f4f4 65%); }
input[type="radio"] { border-radius: 50%; }
input[type="radio"]:checked { background: radial-gradient(#1a4a78 40%, #cde 60%); }

/* Image views */
.content { flex: 1; min-width: 0; display: flex; flex-direction: column; }
.views { flex: 195; display: grid; grid-template-columns: repeat(3, minmax(0, 1fr)); background: #000; }
.view { display: flex; flex-direction: column; min-height: 0; border: 1px solid #000; background: #000; }
.view.selected { border-color: #ff0; }
.view h3, .plot h3 { display: flex; align-items: center; justify-content: space-between; height: 12px; padding: 0 4px 0 2px; color: #dcdcdc; font-weight: 400; white-space: nowrap; }
.max { flex: none; width: 6px; height: 6px; border: 1px solid #ddd; border-top-width: 2px; }
.image { flex: 1 1 0; width: 100%; min-height: 0; }
.white { background: linear-gradient(100deg, #f3f3f3, #fff 70%); }
.dose-labels { font-size: 18px; font-weight: 700; }
.dose-labels .pale { fill: #f4f4f4; stroke: #555; stroke-width: 2px; paint-order: stroke; }
.right { text-anchor: end; }

/* Plots */
.plots { flex: 199; display: grid; grid-template-columns: repeat(2, minmax(0, 1fr)); border-top: 1px solid #555; background: #000; }
.plot { display: flex; flex-direction: column; min-height: 0; }
.plot svg { flex: 1 1 0; width: 100%; min-height: 0; }
.axis { stroke: #777; stroke-width: 2px; fill: none; }
.grid { stroke: #444; stroke-width: 3px; stroke-dasharray: 3 7; fill: none; }
.axis-labels { fill: #d0d0d0; font-size: 20px; text-anchor: middle; }

/* Evaluation area */
.evaluation { display: flex; height: 104px; padding-top: 2px; background: #d5dce5; }
.eval-left { width: 414px; }
.eval-panel { display: flex; gap: 6px; height: 87px; padding: 6px 8px 5px 7px; border: 1px solid #f2f4f7; border-right: 1px solid #555b66; border-bottom: 1px solid #555b66; }
.results { width: 328px; background: #fff; border: 1px solid #b4bac3; }
table { width: 100%; border-collapse: collapse; table-layout: fixed; }
th, td { padding: 0; font-weight: 400; text-align: left; white-space: nowrap; line-height: 10px; }
th { line-height: 13px; background: linear-gradient(#fff, #f1f2f4); }
.results th, .results td { padding-left: 3px; }
.results th { border-right: 1px solid #e3e5e9; }
.results th:nth-child(1) { width: 97px; }
.results th:nth-child(2) { width: 32px; }
.results th:nth-child(3) { width: 33px; }
.results th:nth-child(4) { width: 98px; }
.results th:nth-child(5) { width: 32px; }
.results td { height: 10px; }
.ok { color: #15a31d; }
.verdict { display: flex; align-items: center; justify-content: flex-end; gap: 7px; height: 17px; padding-right: 2px; margin-top: -9px; color: #0c6418; }
.verdict svg { width: 17px; height: 17px; }
.eval-buttons { flex: 1; display: flex; flex-direction: column; gap: 5px; padding-top: 3px; }
.eval-buttons .btn:first-child { margin-bottom: 13px; }
.btn { height: 14px; border: 1px solid #7f858e; border-radius: 2px; background: linear-gradient(#f5f5f5 45%, #dfe0e1 55%, #d6d7d8); color: #111; }
.btn:disabled { color: #9a9ea4; border-color: #b8bcc2; background: #eef0f1; }
.bottom-tabs { display: flex; height: 11px; }
.bottom-tabs button { padding: 0 11px; border: solid #a7aeb9; border-width: 0 1px 1px 0; }
.bottom-tabs .active { padding: 0 10px; border-color: #555b66; font-weight: 700; color: #111; }

.eval-right { flex: 1; display: flex; flex-direction: column; align-items: flex-end; padding: 21px 4px 0 0; }
.status-buttons { display: flex; gap: 4px; padding-right: 8px; }
.status-buttons button { width: 22px; height: 22px; background: #e2e6ec; border: solid; border-width: 1px; border-color: #f8f8f8 #555b66 #555b66 #f8f8f8; }
.status-buttons svg { width: 20px; height: 20px; }
.status-buttons .first { margin-right: 15px; }
.pager { display: flex; gap: 12px; padding: 9px 11px 0 0; }
.pager svg { width: 14px; height: 14px; }
.status { margin-top: 17px; text-align: right; line-height: 8px; }

/* Dialog */
.overlay { position: absolute; inset: 0; display: grid; place-items: center; pointer-events: none; }
.dialog { width: 389px; padding: 0 2px 2px; border: 1px solid #5b7690; border-radius: 4px 4px 2px 2px; background: linear-gradient(90deg, #b9cfe3, #a9c6df 30%, #bfd4e6); box-shadow: 1px 2px 5px #000a; pointer-events: auto; }
.dialog header { display: flex; justify-content: space-between; height: 11px; }
.dialog h2 { line-height: 11px; color: #fff; }
.dialog header button { display: grid; place-items: center; width: 22px; height: 8px; border: 1px solid #7a2c20; border-top: 0; border-radius: 0 0 2px 2px; background: linear-gradient(#e0a090, #c04428 50%, #c85838); }
.dialog header svg { width: 8px; height: 6px; }
.dialog-body { padding: 9px 7px 6px 11px; background: #d5dce5; }
.session { line-height: 12px; }
.list { height: 131px; margin-top: 4px; border: 1px solid #8f96a1; background: #fff; }
.list th, .list td { padding-left: 3px; }
.list th { border-right: 1px solid #eceef0; line-height: 14px; }
.list th:nth-child(1) { width: 79px; }
.list th:nth-child(2) { width: 93px; }
.list th:nth-child(4) { width: 14px; }
.list thead + tbody td { height: 10px; }
.list td svg { float: left; width: 9px; height: 9px; margin-right: 1px; }
.summary { display: flex; justify-content: space-between; padding-top: 8px; line-height: 8px; }
.result { display: flex; align-items: center; gap: 4px; height: 16px; padding-left: 1px; }
.result svg { width: 9px; height: 9px; }
.hint { width: 173px; }
.actions { display: flex; padding-top: 14px; }
.print { width: 110px; }
.cancel { width: 126px; margin: 0 15px 0 auto; }
.close { width: 82px; border-color: #2f9fd0; box-shadow: inset 0 0 0 1px #8fdcf8; }

/* Taskbar */
.taskbar { display: flex; height: 22px; background: linear-gradient(#dfe9f3, #b9cce0 12%, #a9c2dc 60%, #bdd2e6); border-top: 1px solid #7f90a4; }
.taskbar > button { display: grid; place-items: center; width: 32px; }
.taskbar > button svg { width: 18px; height: 18px; }
.taskbar > .running { background: #e4eaf1; border: 1px solid #8a9db4; border-radius: 2px; }
.taskbar > .active { background: #f4f6f8; }
.tray { flex: 1; display: flex; align-items: center; justify-content: flex-end; gap: 5px; color: #fff; background: linear-gradient(#8fa6be, #7f97b0); }
.tray span { margin-right: 4px; }
.tray svg { width: 8px; height: 8px; }
.tray time { margin: 0 4px 0 6px; text-align: center; line-height: 10px; }
.show-desktop { width: 8px; height: 100%; border-left: 1px solid #62788f; background: #a3b7cb; }
```
